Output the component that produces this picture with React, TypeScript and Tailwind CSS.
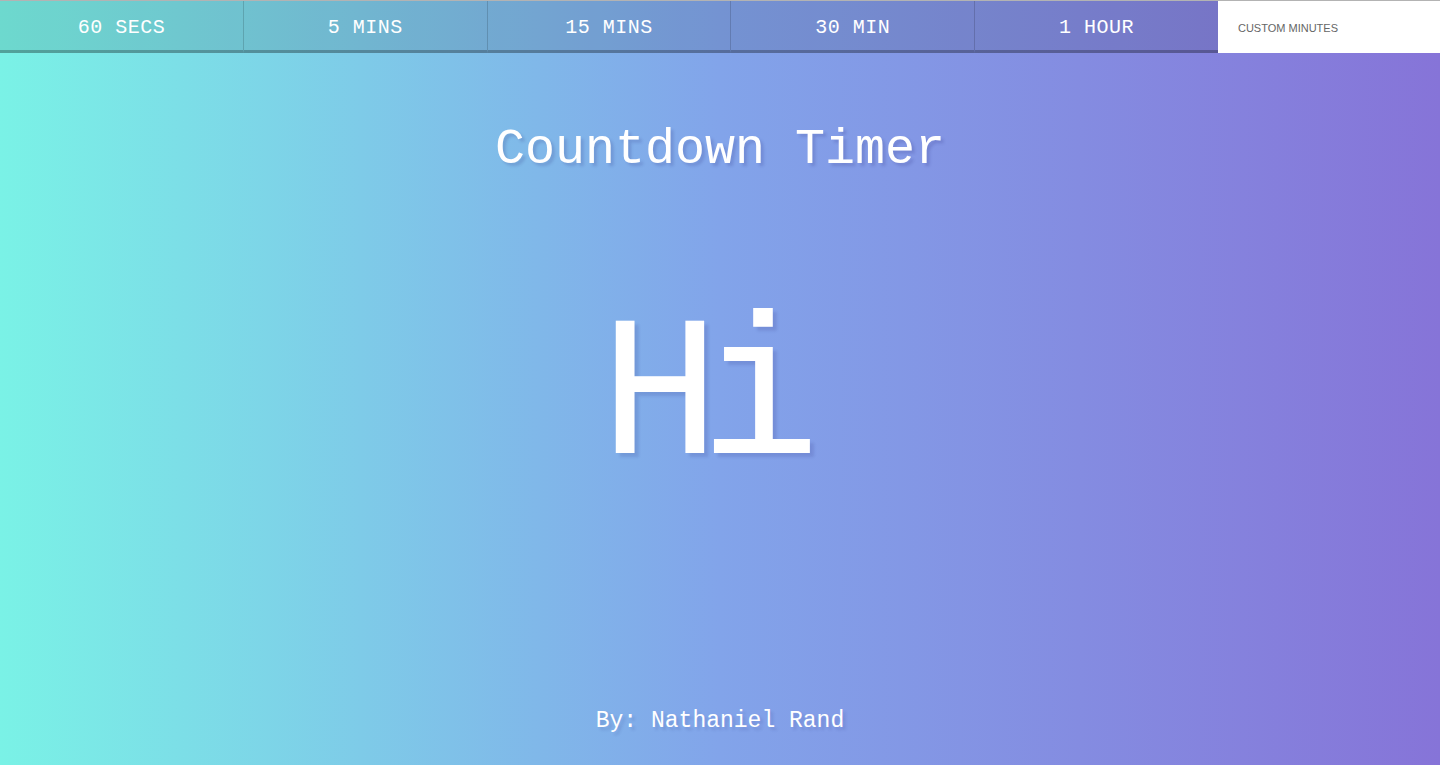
import React from 'react'

const presets = ['60 SECS', '5 MINS', '15 MINS', '30 MIN', '1 HOUR']

export default function App() {
  return (
    <div
      className="flex h-[765px] w-full flex-col overflow-hidden bg-[linear-gradient(90deg,#7af2e6_0%,#82a4ea_50%,#8674d8_100%)] text-white"
      style={{ fontFamily: '"Liberation Mono", "DejaVu Sans Mono", monospace' }}
    >
      {/* Presets */}
      <nav className="flex h-[53px] border-t border-[#b3b3b3]">
        {presets.map((label, i) => (
          <button
            key={label}
            className={
              'flex flex-1 items-center justify-center border-b-[3px] border-b-black/25 bg-black/10 pt-[5px] text-[20px] tracking-[0.5px] text-white ' +
              (i > 0 ? 'border-l border-l-black/15' : '')
            }
          >
            {label}
          </button>
        ))}
        <input
          type="text"
          placeholder="CUSTOM MINUTES"
          className="h-full w-[222px] bg-white pt-[2px] pl-5 text-[11px] uppercase text-[#555] outline-none placeholder:text-[#666]"
          style={{ fontFamily: '"Liberation Sans", Arial, sans-serif' }}
        />
      </nav>

      {/* Title */}
      <h1 className="mt-[72px] text-center text-[50px] leading-none font-normal [text-shadow:3px_3px_3px_rgba(40,40,120,0.18)]">
        Countdown Timer
      </h1>

      {/* Display */}
      <div className="mt-[125px] pr-[40px] text-center text-[200px] leading-none tracking-[-20px] [text-shadow:4px_4px_3px_rgba(40,40,120,0.15)]">
        Hi
      </div>

      {/* Footer */}
      <p className="mt-auto pb-[32px] text-center text-[23px] leading-none [text-shadow:3px_3px_3px_rgba(40,40,120,0.15)]">
        By: Nathaniel Rand
      </p>
    </div>
  )
}
